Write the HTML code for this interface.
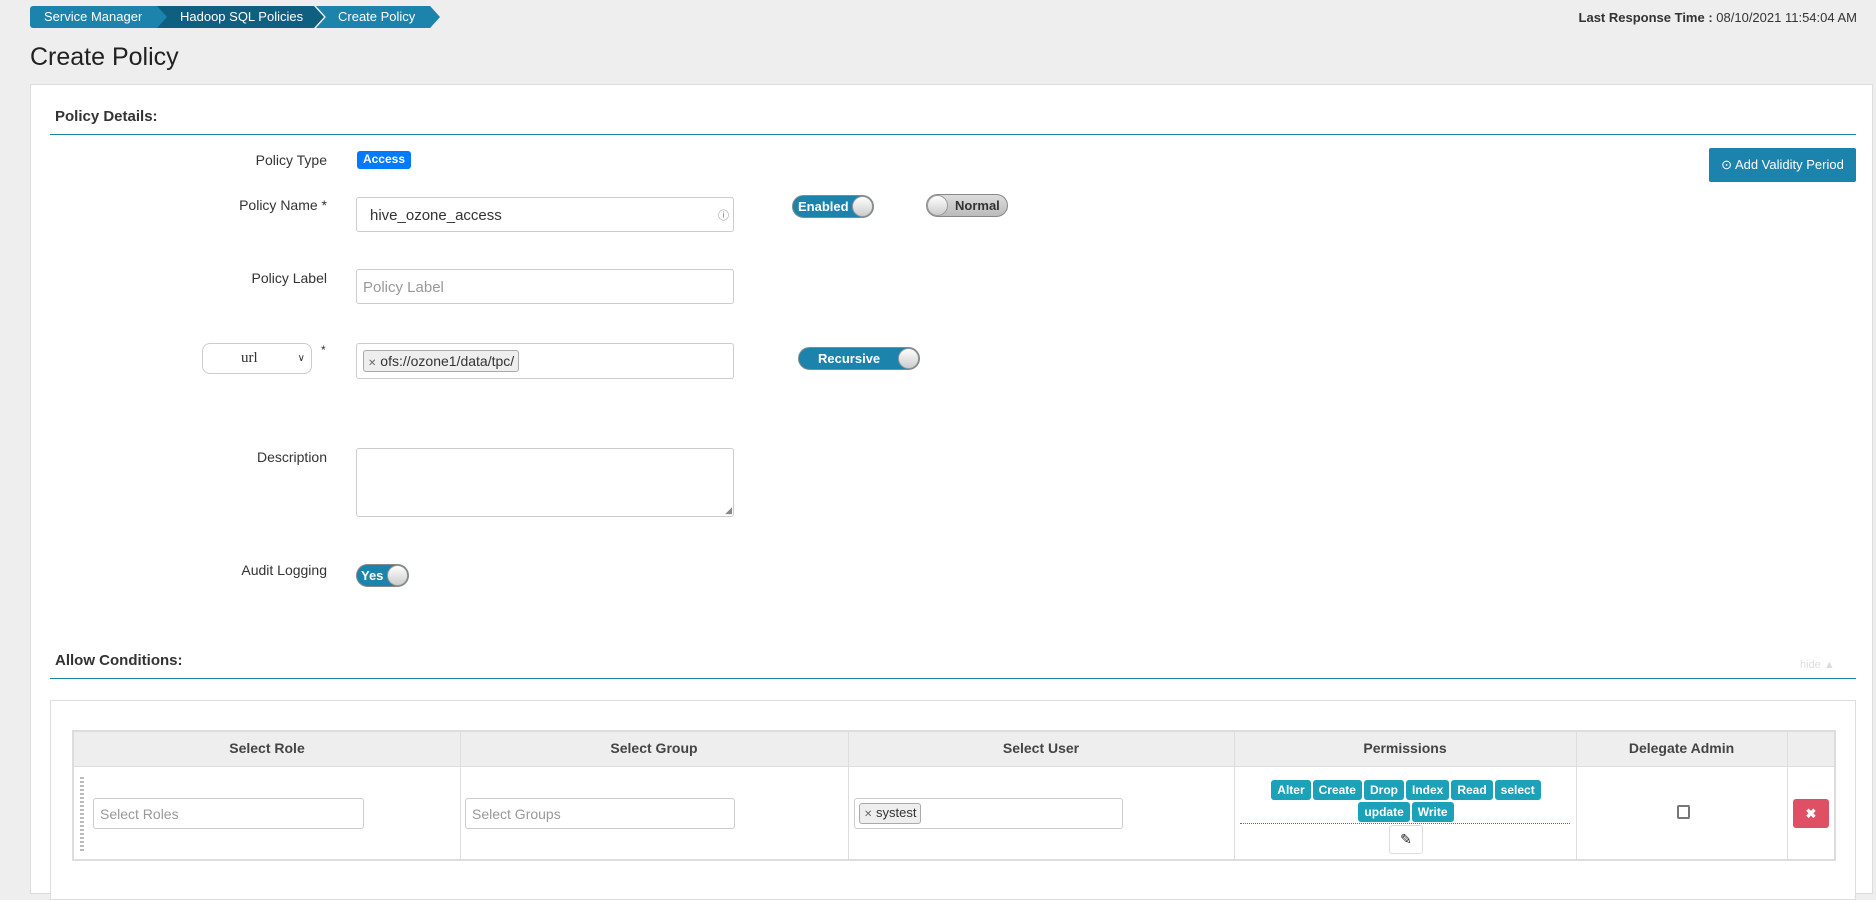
<!DOCTYPE html>
<html><head><style>
*{box-sizing:border-box}
body{margin:0;width:1876px;height:886px;overflow:hidden;background:#eee;font-family:"Liberation Sans",Arial,sans-serif;font-size:14px;color:#333;position:relative}
.a{position:absolute}
.bc{top:6px;height:22px;color:#fff;font-size:13px;line-height:22px}
.lbl{right:1549px;text-align:right;font-size:14px}
.inp{background:#fff;border:1px solid #ccc;border-radius:3px}
.tg{border-radius:12px;border:1px solid #888;font-weight:bold;font-size:13px;line-height:21px;overflow:hidden}
.knob{position:absolute;top:0;width:21px;height:21px;border-radius:50%;background:linear-gradient(#fff,#ccc);border:1px solid #999}
.th{top:730px;height:37px;line-height:37px;text-align:center;font-weight:bold;font-size:14px;color:#444}
.pt{display:inline-block;background:#1ba2b8;color:#fff;font-weight:bold;font-size:12px;padding:0 6px;height:20px;line-height:20px;border-radius:3px;margin:0 1px}
</style></head><body>
<div class="a bc" style="left:30px;width:140px;background:#1b83ac;border-radius:3px 0 0 3px;padding-left:14px;clip-path:polygon(0 0,92% 0,100% 50%,92% 100%,0 100%)">Service Manager</div>
<div class="a bc" style="left:157px;width:167px;background:#0f5f80;padding-left:23px;clip-path:polygon(0 0,94% 0,100% 50%,94% 100%,0 100%,6% 50%)">Hadoop SQL Policies</div>
<div class="a bc" style="left:316px;width:124px;background:#1b83ac;padding-left:22px;clip-path:polygon(0 0,92% 0,100% 50%,92% 100%,0 100%,8% 50%)">Create Policy</div>
<div class="a" style="right:19px;top:10px;font-size:13px"><b>Last Response Time :</b> 08/10/2021 11:54:04 AM</div>
<div class="a" style="left:30px;top:43px;font-size:25px;color:#222">Create Policy</div>
<div class="a" style="left:30px;top:84px;width:1843px;height:810px;background:#fff;border:1px solid #ddd"></div>
<div class="a" style="left:55px;top:108px;font-weight:bold;font-size:15px">Policy Details:</div>
<div class="a" style="left:50px;top:134px;width:1806px;height:1px;background:#1b83ac"></div>
<div class="a lbl" style="top:152px">Policy Type</div>
<div class="a" style="left:357px;top:151px;width:54px;height:18px;background:#007bff;color:#fff;border-radius:3px;font-weight:bold;font-size:12px;text-align:center;line-height:17px">Access</div>
<div class="a" style="left:1709px;top:148px;width:147px;height:34px;background:#1b83ac;color:#fff;border-radius:2px;font-size:13px;line-height:34px;text-align:center">⊙ Add Validity Period</div>
<div class="a lbl" style="top:197px">Policy Name *</div>
<div class="a inp" style="left:356px;top:197px;width:378px;height:35px;padding:9px 13px;font-size:15px">hive_ozone_access<span style="position:absolute;right:4px;top:9px;color:#777;font-size:11px">ⓘ</span></div>
<div class="a tg" style="left:792px;top:195px;width:82px;height:23px;background:#1b83ac;color:#fff;padding-left:5px">Enabled<div class="knob" style="right:0"></div></div>
<div class="a tg" style="left:926px;top:194px;width:82px;height:23px;background:linear-gradient(#ddd,#bbb);color:#333;padding-left:28px">Normal<div class="knob" style="left:0"></div></div>
<div class="a lbl" style="top:270px">Policy Label</div>
<div class="a inp" style="left:356px;top:269px;width:378px;height:35px;padding:9px 6px;font-size:15px;color:#999">Policy Label</div>
<div class="a inp" style="left:202px;top:343px;width:110px;height:31px;border-radius:8px;font-family:'Liberation Serif',serif;font-size:15px;padding:6px 0 0 38px">url<span style="position:absolute;right:6px;font-size:10px;top:9px">∨</span></div>
<div class="a" style="left:321px;top:343px;font-size:12px">*</div>
<div class="a inp" style="left:356px;top:343px;width:378px;height:36px"><div class="a" style="left:6px;top:6px;height:22px;border:1px solid #aaa;border-radius:3px;background:#eee;font-size:14px;padding:2px 4px;line-height:17px"><span style="color:#666;font-size:10px">✕</span> ofs://ozone1/data/tpc/</div></div>
<div class="a tg" style="left:798px;top:347px;width:122px;height:23px;background:#1b83ac;color:#fff;padding-left:19px">Recursive<div class="knob" style="right:0"></div></div>
<div class="a lbl" style="top:449px">Description</div>
<div class="a inp" style="left:356px;top:448px;width:378px;height:69px"><span class="a" style="right:1px;bottom:0;font-size:9px;color:#888">◢</span></div>
<div class="a lbl" style="top:562px">Audit Logging</div>
<div class="a tg" style="left:356px;top:564px;width:53px;height:23px;background:#1b83ac;color:#fff;padding-left:4px">Yes<div class="knob" style="right:0"></div></div>
<div class="a" style="left:55px;top:652px;font-weight:bold;font-size:15px">Allow Conditions:</div>
<div class="a" style="left:1800px;top:659px;font-size:11px;color:#ddd">hide ▲</div>
<div class="a" style="left:50px;top:678px;width:1806px;height:1px;background:#1b83ac"></div>
<div class="a" style="left:50px;top:700px;width:1806px;height:200px;border:1px solid #ddd;background:#fff"></div>
<div class="a" style="left:72px;top:730px;width:1764px;height:131px;border:2px solid #ddd;background:#fff"></div>
<div class="a" style="left:74px;top:732px;width:1760px;height:35px;background:#eee;border-bottom:1px solid #ddd"></div>
<div class="a" style="left:460px;top:732px;width:1px;height:127px;background:#ddd"></div>
<div class="a" style="left:848px;top:732px;width:1px;height:127px;background:#ddd"></div>
<div class="a" style="left:1234px;top:732px;width:1px;height:127px;background:#ddd"></div>
<div class="a" style="left:1576px;top:732px;width:1px;height:127px;background:#ddd"></div>
<div class="a" style="left:1787px;top:732px;width:1px;height:127px;background:#ddd"></div>
<div class="a th" style="left:74px;width:386px">Select Role</div>
<div class="a th" style="left:460px;width:388px">Select Group</div>
<div class="a th" style="left:848px;width:386px">Select User</div>
<div class="a th" style="left:1234px;width:342px">Permissions</div>
<div class="a th" style="left:1576px;width:211px">Delegate Admin</div>
<div class="a" style="left:80px;top:777px;width:4px;height:74px;border-left:2px dotted #bbb;border-right:2px dotted #bbb"></div>
<div class="a inp" style="left:93px;top:798px;width:271px;height:31px;padding:7px 6px;color:#999;font-size:14px">Select Roles</div>
<div class="a inp" style="left:465px;top:798px;width:270px;height:31px;padding:7px 6px;color:#999;font-size:14px">Select Groups</div>
<div class="a inp" style="left:854px;top:798px;width:269px;height:31px"><div class="a" style="left:4px;top:4px;height:21px;border:1px solid #aaa;border-radius:3px;background:#eee;padding:1px 4px;font-size:13px"><span style="color:#666;font-size:10px">✕</span> systest</div></div>
<div class="a" style="left:1236px;top:778px;width:340px;text-align:center;line-height:22px"><span class="pt">Alter</span><span class="pt">Create</span><span class="pt">Drop</span><span class="pt">Index</span><span class="pt">Read</span><span class="pt">select</span><br><span class="pt">update</span><span class="pt">Write</span></div>
<div class="a" style="left:1240px;top:823px;width:330px;border-top:1px dotted #1b83ac"></div>
<div class="a" style="left:1389px;top:825px;width:34px;height:29px;border:1px solid #ddd;border-radius:3px;text-align:center;line-height:27px;font-size:14px;color:#222">✎</div>
<div class="a" style="left:1677px;top:805px;width:13px;height:14px;border:2px solid #777;border-radius:2px"></div>
<div class="a" style="left:1793px;top:799px;width:36px;height:29px;background:#e05064;border-radius:3px;color:#fff;text-align:center;line-height:29px;font-weight:bold;font-size:13px">✖</div>
</body></html>
